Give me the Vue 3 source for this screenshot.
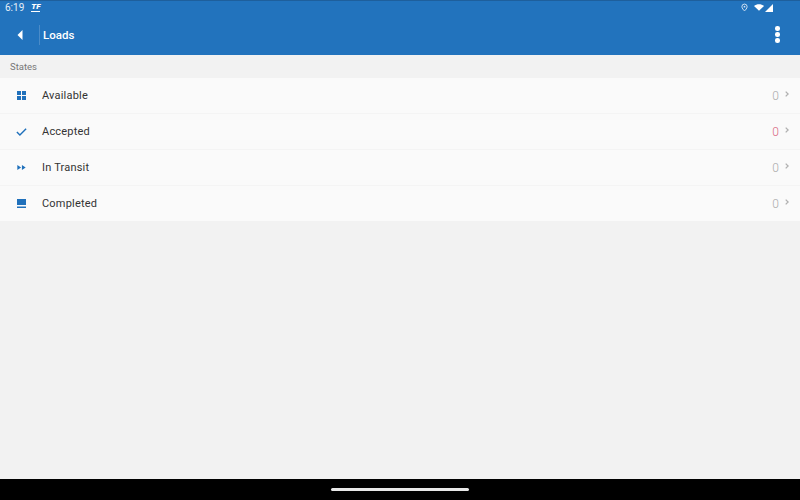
<script setup>
const states = [
  { name: 'Available', count: 0, icon: 'grid' },
  { name: 'Accepted', count: 0, icon: 'check', alert: true },
  { name: 'In Transit', count: 0, icon: 'forward' },
  { name: 'Completed', count: 0, icon: 'tray' },
];
</script>

<template>
  <div class="screen">
    <header class="appbar">
      <div class="statusbar">
        <span class="time">6:19</span>
        <span class="tf">TF</span>
        <span class="spacer"></span>
        <svg class="pin" width="7" height="9" viewBox="0 0 8 9">
          <path d="M4 .6a3 3 0 0 1 3 3C7 5.4 5 7.4 4 8.4 3 7.4 1 5.4 1 3.600a3 3 0 0 1 3-3z" fill="none" stroke="#d5e4f3" stroke-width="1.100" />
          <circle cx="4" cy="3.600" r="1" fill="#d5e4f3" />
        </svg>
        <svg class="wifi" width="10" height="7" viewBox="0 0 12 8">
          <path d="M0 2.200C3.200-.7 8.800-.7 12 2.200L6 8z" fill="#fff" />
        </svg>
        <svg class="signal" width="8" height="8" viewBox="0 0 9 9">
          <path d="M9 0v9H0z" fill="#fff" />
        </svg>
      </div>
      <div class="toolbar">
        <button class="back">
          <svg width="6" height="10" viewBox="0 0 6 10">
            <path d="M5.500 0v10L.5 5z" fill="#fff" />
          </svg>
        </button>
        <h1>Loads</h1>
        <div class="more">
          <i></i>
          <i></i>
          <i></i>
        </div>
      </div>
    </header>

    <div class="section">States</div>

    <ul class="list">
      <li v-for="item in states" :key="item.name">
        <span class="icon">
          <svg v-if="item.icon === 'grid'" width="9" height="9" viewBox="0 0 9 9" fill="#1f70bb">
            <rect width="4" height="4" />
            <rect x="5" width="4" height="4" />
            <rect y="5" width="4" height="4" />
            <rect x="5" y="5" width="4" height="4" />
          </svg>
          <svg v-else-if="item.icon === 'check'" width="11" height="8" viewBox="0 0 12 9">
            <path d="M.8 4.400l3.400 3.400L11.200.9" fill="none" stroke="#1f70bb" stroke-width="1.600" />
          </svg>
          <svg v-else-if="item.icon === 'forward'" width="9" height="5" viewBox="0 0 10 6" fill="#1f70bb">
            <path d="M0 0l4.500 3L0 6zM5.500 0L10 3 5.500 6z" />
          </svg>
          <svg v-else width="9" height="9" viewBox="0 0 9 9" fill="#1f70bb">
            <rect width="9" height="6" />
            <rect y="7.500" width="9" height="1.500" />
          </svg>
        </span>
        <span class="name">{{ item.name }}</span>
        <span class="count" :class="{ alert: item.alert }">{{ item.count }}</span>
        <svg class="chev" width="4" height="6" viewBox="0 0 4 6">
          <path d="M.7.6L3.100 3 .7 5.400" fill="none" stroke="#b0b0b0" stroke-width="1.300" />
        </svg>
      </li>
    </ul>

    <div class="content"></div>

    <footer class="navbar">
      <div class="handle"></div>
    </footer>
  </div>
</template>

<style>
html, body {
  margin: 0;
  padding: 0;
}
</style>

<style scoped>
.screen {
  width: 800px;
  height: 500px;
  display: flex;
  flex-direction: column;
  overflow: hidden;
  background: #f2f2f2;
  font-family: Roboto, "Liberation Sans", sans-serif;
}
.appbar {
  height: 55px;
  background: #2273bd;
  color: #fff;
  box-sizing: border-box;
  border-top: 1px solid #1e5f9c;
}
.statusbar {
  height: 13px;
  display: flex;
  align-items: center;
  padding: 0 5px;
  font-size: 10px;
}
.time {
  color: #e6eff8;
}
.tf {
  margin-left: 7px;
  font-size: 8px;
  font-weight: 900;
  font-style: italic;
  line-height: 8px;
  border-bottom: 1px solid #fff;
}
.spacer {
  flex: 1;
}
.pin {
  margin-right: 6px;
}
.wifi {
  margin-right: 1px;
}
.signal {
  margin-right: 22px;
}
.toolbar {
  height: 41px;
  display: flex;
  align-items: center;
}
.back {
  width: 40px;
  height: 20px;
  padding: 0;
  background: none;
  border: 0;
  border-right: 1px solid #4a8bc8;
  display: flex;
  align-items: center;
  justify-content: center;
}
h1 {
  margin: 1px 0 0 3px;
  flex: 1;
  font-size: 11.500px;
  font-weight: 500;
}
.more {
  width: 6px;
  margin-right: 19px;
  display: flex;
  flex-direction: column;
  gap: 1.500px;
}
.more i {
  width: 4.500px;
  height: 4.500px;
  border-radius: 50%;
  background: #fff;
}
.section {
  height: 23px;
  padding-left: 10px;
  line-height: 23px;
  font-size: 9.500px;
  color: #777;
}
.list {
  margin: 0;
  padding: 0;
  list-style: none;
  background: #fafafa;
}
.list li {
  height: 36px;
  box-sizing: border-box;
  display: flex;
  align-items: center;
  padding-right: 11px;
  border-bottom: 1px solid #f4f4f4;
}
.list li:last-child {
  height: 35px;
  border-bottom: 0;
}
.icon {
  width: 42px;
  display: flex;
  justify-content: center;
  box-sizing: border-box;
}
.name {
  flex: 1;
  font-size: 11px;
  color: #333;
  letter-spacing: 0.2px;
}
.count {
  font-size: 12px;
  font-weight: 300;
  color: #aaa;
  margin-right: 6px;
}
.count.alert {
  color: #d9667f;
}
.chev {
  flex: none;
  margin-bottom: 3px;
}
.content {
  flex: 1;
}
.navbar {
  height: 21px;
  background: #000;
  display: flex;
  align-items: center;
  justify-content: center;
}
.handle {
  width: 138px;
  height: 3px;
  border-radius: 2px;
  background: #e8e8e8;
}
</style>
